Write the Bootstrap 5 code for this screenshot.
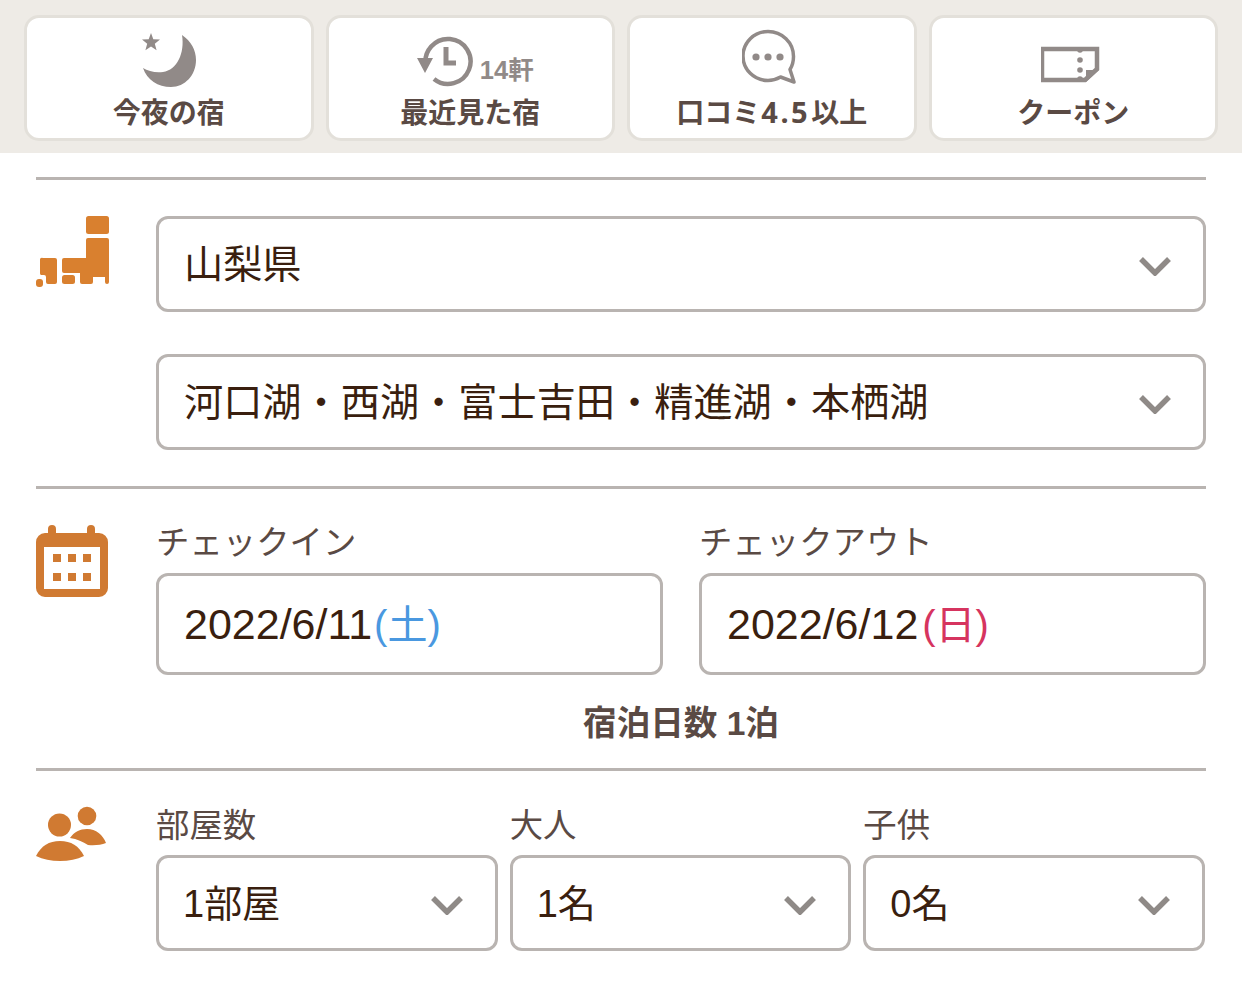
<!DOCTYPE html>
<html lang="ja">
<head>
  <meta charset="UTF-8">
  <title>宿検索</title>
  <meta name="viewport" content="width=device-width, initial-scale=1">
  <link href="https://cdn.jsdelivr.net/npm/bootstrap@5.3.0/dist/css/bootstrap.min.css" rel="stylesheet">
  <style>
    body { font-family: "Liberation Sans", "Noto Sans CJK JP", sans-serif; color: #3a1f0f; background: #fff; overflow: hidden; }
    .top-bar { background: #eeebe6; height: 153px; padding: 15px 24px 12px; gap: 12px; }
    .tile { flex: 1 1 0; height: 126px; background: #fff; border: 3px solid #e3e0da; border-radius: 15px; padding: 0; color: #5a4a44; font-size: 28px; font-weight: 700; line-height: 1; }
    .tile:hover { background: #fff; border-color: #e3e0da; color: #5a4a44; }
    .tile-icon { height: 68px; margin-top: 8px; margin-bottom: 6px; }
    .tile-clock { margin-left: 10px; }
    .tile-count { font-size: 25.5px; color: #918a88; margin: 0 0 11px 7px; }
    .tile-label { height: 30px; }
    .rating-num { font-family: "Noto Sans", sans-serif; font-size: 29px; line-height: 0; letter-spacing: 2.5px; margin: 0 1px; }
    .search-box { padding: 24px 36px 0; }
    .rule { height: 3px; background: #b9b4b1; opacity: 1; border: 0; margin: 0; }
    .side-icon { width: 120px; flex: none; }
    .icon-date { margin-top: -2px; }
    .icon-guest { margin-top: -3px; }
    .area-row { padding: 36px 0; }
    .date-wrap { padding-top: 37px; }
    .guest-wrap { padding-top: 38px; }
    .pick, .date-box { height: 96px; border: 3px solid #b9b4b1; border-radius: 12px; color: #3a1f0f; box-shadow: none; }
    .pick { font-size: 39.2px; padding: 2px 70px 0 25px; background-size: 34px 20px; background-position: right 31px top calc(50% + 2px); background-image: url("data:image/svg+xml,%3Csvg xmlns='http://www.w3.org/2000/svg' viewBox='0 0 34 20'%3E%3Cpath d='M3 3l14 14L31 3' fill='none' stroke='%238f8a87' stroke-width='5.5'/%3E%3C/svg%3E"); }
    .date-box { height: 102px; font-size: 43px; padding: 0 25px; background: #fff; line-height: 1; }
    .area-stack { gap: 42px; }
    .sat, .sun { font-size: 40px; margin-left: 2px; }
    .sat { color: #4a98e0; }
    .sun { color: #d6345f; margin-left: 4px; }
    .field-label { font-size: 33.4px; line-height: 1; color: #5a4a44; margin-bottom: 14px; }
    .stay-note { font-size: 33.6px; font-weight: 700; color: #5a4a44; line-height: 1; margin: 32px 0 27.4px; }
    .date-row { gap: 36px; }
    .guest-row { gap: 12px; padding-right: 1px; }
    .guest-row .field-label { margin-bottom: 12.6px; }
    .guest-row .pick { font-size: 38px; padding-left: 24px; }
  </style>
</head>
<body>

  <!-- shortcut tiles -->
  <div class="top-bar d-flex">
    <a class="btn tile d-flex flex-column align-items-center" href="#">
      <div class="tile-icon d-flex">
        <svg width="60" height="68" viewBox="139 26 60 68">
          <path d="M182 35c9 6 14 15 14 25 0 15-11 27-25 27-13 0-24-7-28-19 5 3 12 5 20 4 14-2 22-19 19-37z" fill="#918a88"/>
          <path d="M151 33l2.3 6.2 6.7.3-5.2 4.2 1.8 6.5-5.6-3.7-5.6 3.7 1.8-6.5-5.2-4.2 6.7-.3z" fill="#918a88"/>
        </svg>
      </div>
      <div class="tile-label">今夜の宿</div>
    </a>
    <a class="btn tile d-flex flex-column align-items-center" href="#">
      <div class="tile-icon tile-clock d-flex align-items-end">
        <svg width="56" height="68" viewBox="416 26 56 68">
          <path d="M425 66a22.500 22.500 0 1 1 8 13" fill="none" stroke="#918a88" stroke-width="4.500"/>
          <path d="M416 58h16l-8 15z" fill="#918a88"/>
          <path d="M445 47v16h10" fill="none" stroke="#918a88" stroke-width="5"/>
        </svg>
        <span class="tile-count">14軒</span>
      </div>
      <div class="tile-label">最近見た宿</div>
    </a>
    <a class="btn tile d-flex flex-column align-items-center" href="#">
      <div class="tile-icon d-flex">
        <svg width="60" height="68" viewBox="743 26 60 68">
          <path d="M769 31.500c14 0 25.500 11 25.500 25 0 5-1 9-3.500 13l4 12.500-13.500-5c-3.500 2-8 3.500-12.500 3.500-14 0-25-11-25-24.500s11-24.500 25-24.500z" fill="none" stroke="#918a88" stroke-width="3.500" stroke-linejoin="round"/>
          <circle cx="757" cy="57" r="3.600" fill="#918a88"/>
          <circle cx="769" cy="57" r="3.600" fill="#918a88"/>
          <circle cx="781" cy="57" r="3.600" fill="#918a88"/>
        </svg>
      </div>
      <div class="tile-label">口コミ<span class="rating-num">4.5</span>以上</div>
    </a>
    <a class="btn tile d-flex flex-column align-items-center" href="#">
      <div class="tile-icon d-flex">
        <svg width="64" height="68" viewBox="1040 26 64 68">
          <path d="M1041 49h55v20l-12 11h-43z" fill="none" stroke="#918a88" stroke-width="4.500"/>
          <path d="M1085 70h13l-13 12z" fill="#918a88"/>
          <circle cx="1079" cy="50" r="2.800" fill="#918a88"/>
          <circle cx="1079" cy="60" r="2.800" fill="#918a88"/>
          <circle cx="1079" cy="70" r="2.800" fill="#918a88"/>
          <circle cx="1079" cy="79" r="2.800" fill="#918a88"/>
        </svg>
      </div>
      <div class="tile-label">クーポン</div>
    </a>
  </div>

  <div class="search-box">
    <hr class="rule">

    <!-- area -->
    <div class="d-flex area-row">
      <div class="side-icon">
        <svg width="74" height="72" viewBox="36 216 74 72">
          <g fill="#d9802f">
            <rect x="86" y="216" width="23" height="18" rx="2.500"/>
            <path d="M88 238h19a2 2 0 0 1 2 2v42a2 2 0 0 1-4 0v-5h-12v5a2 2 0 0 1-2 2h-9a2 2 0 0 1-2-2v-9H64a2 2 0 0 1-2-2v-11a2 2 0 0 1 2-2h22v-18a2 2 0 0 1 2-2z"/>
            <path d="M43 258h12a2 2 0 0 1 2 2v22a2 2 0 0 1-2 2h-7a2 2 0 0 1-2-2v-5a2 2 0 0 0-2-2h-3a2 2 0 0 1-1-2v-13a2 2 0 0 1 3-2z"/>
            <rect x="62" y="275" width="13" height="9" rx="2.500"/>
            <rect x="36" y="279" width="7" height="8" rx="3"/>
          </g>
        </svg>
      </div>
      <div class="flex-grow-1 d-flex flex-column area-stack">
        <select class="form-select pick"><option>山梨県</option></select>
        <select class="form-select pick"><option>河口湖・西湖・富士吉田・精進湖・本栖湖</option></select>
      </div>
    </div>
    <hr class="rule">

    <!-- dates -->
    <div class="d-flex date-wrap">
      <div class="side-icon icon-date">
        <svg width="72" height="73" viewBox="36 525 72 73">
          <path d="M45 534h3v-4a4 4 0 0 1 8 0v4h31v-4a4 4 0 0 1 8 0v4h4a9 9 0 0 1 9 9v46a9 9 0 0 1-9 9H45a9 9 0 0 1-9-9v-46a9 9 0 0 1 9-9z" fill="#d07a32"/>
          <rect x="44" y="548" width="56" height="42" fill="#fff"/>
          <g fill="#d07a32">
            <rect x="53" y="555" width="8" height="8"/><rect x="68" y="555" width="8" height="8"/><rect x="83" y="555" width="8" height="8"/>
            <rect x="53" y="574" width="8" height="8"/><rect x="68" y="574" width="8" height="8"/><rect x="83" y="574" width="8" height="8"/>
          </g>
        </svg>
      </div>
      <div class="flex-grow-1">
        <div class="d-flex date-row">
          <div class="flex-fill w-50">
            <div class="field-label">チェックイン</div>
            <div class="form-control date-box d-flex align-items-center"><span>2022/6/11<span class="sat">(土)</span></span></div>
          </div>
          <div class="flex-fill w-50">
            <div class="field-label">チェックアウト</div>
            <div class="form-control date-box d-flex align-items-center"><span>2022/6/12<span class="sun">(日)</span></span></div>
          </div>
        </div>
        <div class="stay-note text-center">宿泊日数 1泊</div>
      </div>
    </div>
    <hr class="rule">

    <!-- guests -->
    <div class="d-flex guest-wrap">
      <div class="side-icon icon-guest">
        <svg width="72" height="56" viewBox="36 806 72 56">
          <g fill="#d07a32">
            <circle cx="59.500" cy="825" r="11.500"/>
            <path d="M36 856c5-10 13-15 24-15s19 5 24 15c-7 3.500-15 5-24 5s-17-1.500-24-5z"/>
            <circle cx="87" cy="816" r="9.300"/>
            <path d="M70 838c4-6 10-9 17-9 9 0 16 6 19 14-5 2-11 2.500-18 2-5-3-11-6-18-7z"/>
          </g>
        </svg>
      </div>
      <div class="flex-grow-1 d-flex guest-row">
        <div class="flex-fill w-100">
          <div class="field-label">部屋数</div>
          <select class="form-select pick"><option>1部屋</option></select>
        </div>
        <div class="flex-fill w-100">
          <div class="field-label">大人</div>
          <select class="form-select pick"><option>1名</option></select>
        </div>
        <div class="flex-fill w-100">
          <div class="field-label">子供</div>
          <select class="form-select pick"><option>0名</option></select>
        </div>
      </div>
    </div>
  </div>

  <script src="https://cdn.jsdelivr.net/npm/bootstrap@5.3.0/dist/js/bootstrap.bundle.min.js"></script>
</body>
</html>
